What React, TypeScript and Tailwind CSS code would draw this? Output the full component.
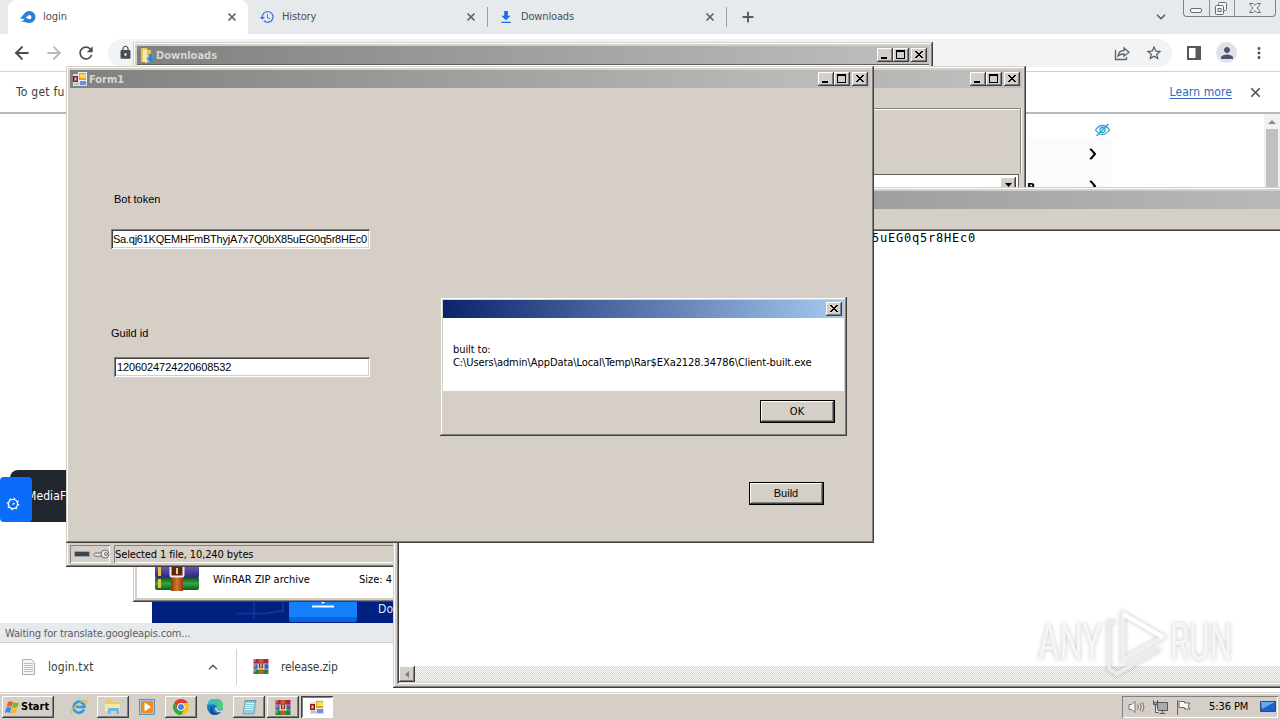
import type { ReactNode } from 'react';
import clsx from 'clsx';
import { ArrowLeft, ArrowRight, ChevronDown, ChevronUp, Plus, X } from 'lucide-react';
import { MdHistory, MdLock, MdMoreVert, MdPerson, MdRefresh, MdStarBorder } from 'react-icons/md';

const ui = "font-['DejaVu_Sans_Condensed','DejaVu_Sans',sans-serif] [font-stretch:condensed]";
const sans = "font-['Liberation_Sans',sans-serif]";

const raised = 'bg-[#d4d0c8] shadow-[inset_-1px_-1px_#404040,inset_1px_1px_#fff,inset_-2px_-2px_#808080]';
const frame =
  'bg-[#d6cfc8] shadow-[inset_-1px_-1px_#404040,inset_1px_1px_#d4d0c8,inset_-2px_-2px_#808080,inset_2px_2px_#fff]';
const sunken = 'shadow-[inset_1px_1px_#808080,inset_-1px_-1px_#fff,inset_2px_2px_#404040,inset_-2px_-2px_#d4d0c8]';
const thinSunken = 'shadow-[inset_1px_1px_#808080,inset_-1px_-1px_#fff]';

function CaptionButton({ kind }: { kind: 'min' | 'max' | 'close' }) {
  return (
    <div className={clsx('h-[14px] w-4', raised, kind === 'close' && 'ml-0.5')}>
      <svg viewBox="0 0 16 14" className="h-[14px] w-4" shapeRendering="crispEdges">
        {kind === 'min' && <path d="M4 9h6v2H4z" />}
        {kind === 'max' && <path d="M3 2h9v9H3zM4 4v6h7V4z" fillRule="evenodd" />}
        {kind === 'close' && (
          <path d="M4 3h2v1h1v1h2V4h1V3h2v1h-1v1h-1v1H9v1h1v1h1v1h1v1h-2V9H9V8H7v1H6v1H4V9h1V8h1V7h1V6H6V5H5V4H4z" />
        )}
      </svg>
    </div>
  );
}

function TitleBar({ icon, title, active, closeOnly }: { icon?: ReactNode; title?: string; active?: boolean; closeOnly?: boolean }) {
  return (
    <div
      className={clsx(
        'flex h-[18px] shrink-0 items-center pr-0.5',
        active ? 'bg-linear-to-r/srgb from-[#0a246a] to-[#a6caf0]' : 'bg-linear-to-r/srgb from-[#808080] to-[#c0c0c0]',
      )}
    >
      <div className="flex w-[19px] justify-end pr-px">{icon}</div>
      <span className={clsx(ui, 'flex-1 pt-px text-[11px] leading-[17px] font-bold text-[#d9d5cd]')}>{title}</span>
      {!closeOnly && (
        <>
          <CaptionButton kind="min" />
          <CaptionButton kind="max" />
        </>
      )}
      <CaptionButton kind="close" />
    </div>
  );
}

function FormIcon({ className }: { className?: string }) {
  return (
    <svg viewBox="0 0 14 14" className={clsx('h-[14px] w-[14px]', className)}>
      <path d="M0 2h14v12H0z" fill="#dcdce2" />
      <path d="M5 0h9v9H5z" fill="#f0f0f0" />
      <path d="M6 1h7v7H6z" fill="#e5a51c" />
      <path d="M7 2h6v4H7z" fill="#ffd957" />
      <path d="M0 4h5v6H0z" fill="#8f1d16" />
      <path d="M1.500 5.500h2v3h-2z" fill="#f2b9a4" />
      <path d="M7 9h6v4H7z" fill="#6d8fe0" />
      <path d="M1 11h5v2H1z" fill="#b9c4dc" />
    </svg>
  );
}

function RarIcon({ className }: { className?: string }) {
  return (
    <svg viewBox="0 0 16 16" className={className}>
      <path d="M0 0h16v5H0z" fill="#b3204a" />
      <path d="M0 5.500h16v5H0z" fill="#4a55c0" />
      <path d="M0 11h16v5H0z" fill="#1c8a30" />
      <path d="M1.500 0v16" stroke="#e9c37c" strokeWidth="1" strokeDasharray="3 2.500" />
      <path d="M5.500 0h5v16h-5z" fill="#c0601c" />
      <path d="M5 5h6v6H5z" fill="#7a3512" />
      <path d="M5 5v5.500h6V5M8 5v4" fill="none" stroke="#f4ece0" strokeWidth="1.300" />
    </svg>
  );
}

// large version of the stacked books, used in the details pane
function BooksIcon({ className }: { className?: string }) {
  return (
    <svg viewBox="0 0 46 46" className={className}>
      <defs>
        <linearGradient id="purple" x2="0" y2="1">
          <stop stopColor="#7a68d8" />
          <stop offset="1" stopColor="#2c2378" />
        </linearGradient>
        <linearGradient id="green" x2="0" y2="1">
          <stop stopColor="#0d4d18" />
          <stop offset=".5" stopColor="#35a545" />
          <stop offset="1" stopColor="#0c5c1a" />
        </linearGradient>
        <linearGradient id="belt" x2="1" y2="0">
          <stop stopColor="#8a3a10" />
          <stop offset=".5" stopColor="#d8762c" />
          <stop offset="1" stopColor="#8a3a10" />
        </linearGradient>
      </defs>
      <rect x="1" y="3" width="44" height="14" rx="2" fill="#b3204a" />
      <rect x="1" y="18" width="44" height="15" rx="2" fill="url(#purple)" />
      <rect x="1" y="32" width="44" height="13" rx="2" fill="url(#green)" />
      <path d="M5.500 20v11M5.500 34v9" stroke="#ecc545" strokeWidth="3" />
      <path d="M17 2h12v44H17z" fill="url(#belt)" />
      <rect x="16.500" y="20.500" width="13" height="11" rx="1.500" fill="#5b260c" stroke="#f3ede2" strokeWidth="2" />
      <path d="M23 23v6" stroke="#e9c9a0" strokeWidth="2" />
    </svg>
  );
}

function FolderIcon() {
  return (
    <svg viewBox="0 0 15 16" className="h-4 w-[15px]">
      <path d="M1 1h6l1 2h3v12H1z" fill="#e8c65a" />
      <path d="M3 2l4 1v13l-4-1z" fill="#fbe9a0" />
      <path d="M9 7h3v4h2.500L10.500 15.500 6.500 11H9z" fill="#1f86d8" stroke="#3fb0f0" strokeWidth=".5" />
    </svg>
  );
}

function TabItem({ icon, label, labelClass }: { icon: ReactNode; label: string; labelClass?: string }) {
  return (
    <div className="flex h-[34px] items-center pr-[10px] pl-3">
      <div className="flex w-[23px] items-center">{icon}</div>
      <span className={clsx(ui, 'flex-1 pt-px text-[11px] text-[#4b4f54]', labelClass)}>{label}</span>
      <X className="h-3 w-3 text-[#5f6368]" strokeWidth={3.5} />
    </div>
  );
}

function Chrome() {
  return (
    <div className="flex h-[692px] flex-col bg-white">
      {/* tab strip */}
      <div className="flex h-[34px] shrink-0 bg-[#e7eaed]">
        <div className="ml-2 w-[240px] rounded-t-lg bg-white">
          <TabItem
            label="login"
            icon={
              <svg viewBox="0 0 16 12" className="h-3 w-4">
                <path d="M0 7C3 6 4 0 9.500 0a6 6 0 0 1 0 12C6 12 4 10 1 10.500 3 9.500 4 9 4.500 8 3 8.200 1.500 7.500 0 7z" fill="#2a80d4" />
                <path d="M5.500 6.500C7.500 6 8 4 9.700 4a2.200 2.200 0 0 1 0 4.300C8 8.300 7 7 5.500 6.500z" fill="#fff" />
              </svg>
            }
          />
        </div>
        <div className="w-[239px]">
          <TabItem
            label="History"
            labelClass="-ml-px tracking-[-0.15px]"
            icon={<MdHistory className="-ml-px h-4 w-4 text-[#3b74d8]" />}
          />
        </div>
        <div className="flex w-[239px] items-center">
          <div className="h-5 w-px bg-[#9a9da1]" />
          <div className="w-[238px]">
            <TabItem
              label="Downloads"
              labelClass="-ml-0.5 tracking-[-0.15px]"
              icon={
                <svg viewBox="0 0 12 14" className="h-[13px] w-3 fill-[#1f6fe0]">
                  <path d="M4 0h4v5h3L6 10 1 5h3zM1 11.500h10V13H1z" />
                </svg>
              }
            />
          </div>
        </div>
        <div className="mt-[7px] h-5 w-px bg-[#9a9da1]" />
        <Plus className="mt-[9px] ml-[13px] h-4 w-4 text-[#55595e]" strokeWidth={2.8} />
        <ChevronDown className="mt-[10px] ml-[398px] h-3.5 w-3.5 text-[#5f6368]" strokeWidth={3} />
        <div className="ml-[15px] flex h-[17px] w-[93px] rounded-b-[4px] border border-t-0 border-[#7d8085]">
          <svg viewBox="0 0 91 16" className="h-4 w-[91px]" fill="none" stroke="#686c72">
            <path d="M25.500 0v16M50.500 0v16" stroke="#8b8e93" />
            <rect x="6.500" y="8.500" width="11" height="4" rx="1.500" fill="#f5f6f8" />
            <rect x="34.500" y="2.500" width="8" height="8" rx="1" fill="#f5f6f8" />
            <rect x="31.500" y="5.500" width="8" height="9" rx="1" fill="#f5f6f8" />
            <rect x="34" y="8.500" width="3" height="3" />
            <path d="M65.500 3.500H69l2 2 2-2h3.500L73 8l3.500 4.500H73l-2-2-2 2h-3.500L69 8z" fill="#f5f6f8" />
          </svg>
        </div>
      </div>

      {/* toolbar */}
      <div className="flex h-[37px] shrink-0 items-center pl-3">
        <ArrowLeft className="h-5 w-5 text-[#4a4d51]" strokeWidth={2.4} />
        <ArrowRight className="ml-3 h-5 w-5 text-[#b9bbbe]" strokeWidth={2.4} />
        <MdRefresh className="ml-[12px] h-5 w-5 text-[#4a4d51]" />
        <div className="ml-3 flex h-7 w-[1064px] items-center rounded-full bg-[#f1f3f4] pr-[9px] pl-2.5">
          <MdLock className="h-[15px] w-[15px] text-[#4a4d51]" />
          <svg viewBox="0 0 16 16" className="ml-auto h-4 w-4" fill="none" stroke="#5f6368" strokeWidth="1.300">
            <path d="M1.500 5v9.500h11V12M4 11c.5-4 3-5.500 6-5.500V3l5 4.200-5 4V9C7 9 5.500 9.500 4 11z" />
          </svg>
          <MdStarBorder className="ml-[15px] h-[18px] w-[18px] text-[#55595e]" />
        </div>
        <svg viewBox="0 0 14 14" className="ml-[15px] h-[14px] w-[14px]">
          <path d="M0 0h14v14H0zM2 2v10h6.500V2z" fill="#55595e" fillRule="evenodd" />
        </svg>
        <div className="ml-[15px] flex h-[21px] w-[21px] items-center justify-center rounded-full bg-[#dfe2e8]">
          <MdPerson className="h-[18px] w-[18px] text-[#4d566e]" />
        </div>
        <MdMoreVert className="ml-[13px] h-[18px] w-[18px] text-[#55595e]" />
      </div>

      {/* info bar */}
      <div
        className={clsx(
          'flex h-[43px] shrink-0 items-center border-t border-b-2 border-[#d0d2d4] border-b-[#b6b8ba] pr-[17px] pl-4 text-[12px]',
          ui,
        )}
      >
        <span className="flex-1 tracking-[0.25px] text-[#3a3d41]">To get fu</span>
        <span className="tracking-[0.1px] text-[#2c6cc0] underline underline-offset-2">Learn more</span>
        <X className="ml-[16px] h-[15px] w-[15px] text-[#55595e]" strokeWidth={2.8} />
      </div>

      {/* page */}
      <div className="flex h-[509px] shrink-0">
        <div className="w-[152px] pt-[356px]">
          <div className="relative flex h-[52px]">
            <div className={clsx('ml-[10px] w-[142px] rounded-tl-lg bg-[#22262e] pl-[17px] text-[12px] leading-[53px] tracking-[0.1px] text-white', ui)}>
              MediaFire
            </div>
            <div className="absolute bottom-0 left-0 flex h-[45px] w-8 items-center justify-center rounded bg-[#0a6cf8] pt-2 pr-[6px]">
              <svg viewBox="0 0 14 14" className="h-[14px] w-[14px]" fill="none" stroke="#fff">
                <circle cx="7" cy="7" r="4.600" strokeWidth="1.400" />
                <circle cx="7" cy="7" r="5.700" strokeWidth="1.200" strokeDasharray="1.500 2.980" />
                <path d="M6.500 7.500l2-1.500" strokeWidth="1.200" />
              </svg>
            </div>
          </div>
        </div>
        <div className="flex h-[60px] w-[876px] self-end bg-[#00217f]">
          <svg viewBox="0 0 226 60" className="h-[60px] w-[226px]">
            <path d="M85 50.500h30l16-3M102 36v20M131 30v20M182 36v20M190 36v22" stroke="#123a9c" strokeWidth="1.500" fill="none" />
            <rect x="137" y="10" width="68" height="49" rx="3" fill="#1480fa" />
            <path d="M137 54h68v2a3 3 0 0 1-3 3h-62a3 3 0 0 1-3-3z" fill="#0a66e0" />
            <path d="M160 43.500h22" stroke="#fff" strokeWidth="2" />
            <path d="M168 38h6l-3 3z" fill="#fff" />
          </svg>
          <span className={clsx(ui, 'mt-[38px] text-[12px] leading-4 tracking-[0.3px] text-[#dfe8ff]')}>Download</span>
        </div>
        <div className="w-[84px]">
          <div className="flex h-6 items-center justify-end bg-white pt-2">
            <svg viewBox="0 0 17 14" className="mr-px h-3.5 w-[17px]" fill="none" stroke="#2aa6cf" strokeWidth="1.300">
              <path d="M1.500 7C4 3.300 6 2.500 8.500 2.500S13 3.300 15.500 7C13 10.700 11 11.500 8.500 11.500S4 10.700 1.500 7zM2.500 13l12-12" />
              <circle cx="8.500" cy="7" r="2.500" />
            </svg>
          </div>
          <div className="flex h-[31px] items-center justify-end bg-[#fcfbfb] pr-[15px]">
            <svg viewBox="0 0 8 12" className="h-3 w-2" fill="none" stroke="#000" strokeWidth="2">
              <path d="M1 1l1.500 1L6 6l-3.500 4L1 11" />
            </svg>
          </div>
          <div className="flex h-[34px] items-center justify-between bg-[#fcfbfb] pr-[15px]">
            <b className={clsx(ui, '-ml-px pt-[3px] text-[12px]')}>B</b>
            <svg viewBox="0 0 8 12" className="h-3 w-2" fill="none" stroke="#000" strokeWidth="2">
              <path d="M1 1l1.500 1L6 6l-3.500 4L1 11" />
            </svg>
          </div>
        </div>
        <div className="ml-auto w-4 bg-[#f1f1f1] pt-[6px]">
          <svg viewBox="0 0 8 4" className="ml-1 h-1 w-2">
            <path d="M4 0l4 4H0z" fill="#8b8b8b" />
          </svg>
          <div className="mx-auto mt-[5px] h-[300px] w-3 bg-[#c1c1c1]" />
        </div>
      </div>

      <div
        className={clsx(
          'h-5 shrink-0 border-b border-[#d0d2d4] bg-[#e7eaed] pl-[5px] text-[11px] leading-[21px] tracking-[-0.17px] text-[#5a5e63]',
          ui,
        )}
      >
        Waiting for translate.googleapis.com...
      </div>

      {/* downloads shelf */}
      <div className={clsx('flex flex-1 items-center pb-0.5 text-[12px] text-[#3a3d41]', ui)}>
        <div className="flex h-9 w-[237px] items-center border-r border-[#d0d2d4] pr-[16px] pl-[22px]">
          <svg viewBox="0 0 13 16" className="h-4 w-[13px]">
            <path d="M.5.500h9l3 3v12H.5z" fill="#f4f5f4" stroke="#a9adab" />
            <path d="M2 4.500h9M2 6.500h9M2 8.500h9M2 10.500h9M2 12.500h9" stroke="#b6c0bd" />
          </svg>
          <span className="ml-[13px] flex-1 tracking-[0.1px]">login.txt</span>
          <ChevronUp className="h-3.5 w-3.5 text-[#5f6368]" strokeWidth={2.8} />
        </div>
        <RarIcon className="ml-4 h-[15px] w-4" />
        <span className="ml-3 tracking-[-0.15px]">release.zip</span>
      </div>
    </div>
  );
}

function DownloadsWindow() {
  return (
    <div className={clsx('absolute top-[42px] left-[133px] flex h-[560px] w-[800px] flex-col p-1', frame)}>
      <TitleBar title="Downloads" icon={<FolderIcon />} />
      <div className="flex flex-1 items-end border-t border-[#606060] bg-white pb-[7px]">
        <BooksIcon className="ml-[17px] h-[46px] w-[46px]" />
        <div className={clsx('mb-[3px] ml-[13px] flex text-[11px] leading-4', ui)}>
          <span className="w-[146px]">WinRAR ZIP archive</span>
          <span>Size: 4.26 MB</span>
        </div>
      </div>
    </div>
  );
}

function RarWindow() {
  return (
    <div className={clsx('absolute top-[66px] left-[66px] flex h-[501px] w-[960px] flex-col p-1', frame)}>
      <TitleBar />
      <div className="mt-[20px] mr-px h-[66px] border-t border-r border-[#808080] shadow-[inset_0_1px_#fff,1px_0_#fff]" />
      <div className="mr-[3px] flex h-[22px] justify-end border border-[#606060] bg-white p-0.5">
        <div className={clsx('flex w-4 items-center justify-center', raised)}>
          <svg viewBox="0 0 7 4" className="h-1 w-[7px]">
            <path d="M0 0h7L3.500 4z" />
          </svg>
        </div>
      </div>
      <div className="flex-1" />
      <div className="flex h-[18px] gap-1">
        <div className={clsx('flex w-10 items-center gap-[3px] pl-1', thinSunken)}>
          <svg viewBox="0 0 16 8" className="h-2 w-4 shrink-0">
            <rect x=".5" y="1.500" width="15" height="5" rx="1" fill="#38464f" stroke="#9ba3a6" />
          </svg>
          <svg viewBox="0 0 17 10" className="h-2.5 w-[17px] shrink-0" fill="#e9e9e6" stroke="#6f7375">
            <path d="M9 4H2L.5 5.500 2 7h2l1 1 1-1h3z" />
            <circle cx="12" cy="5" r="4" />
            <circle cx="13" cy="5" r="1.500" />
          </svg>
        </div>
        <div className={clsx('flex-1 pl-px text-[11px] leading-[19px] tracking-[-0.12px]', ui, thinSunken)}>
          Selected 1 file, 10,240 bytes
        </div>
      </div>
    </div>
  );
}

function NotepadWindow() {
  return (
    <div className={clsx('absolute top-[187px] left-[393px] flex h-[501px] w-[1000px] flex-col p-1', frame)}>
      <TitleBar />
      <div className="h-5" />
      <div className={clsx('flex flex-1 flex-col bg-white p-0.5', sunken)}>
        <div className="w-[577px] flex-1 text-right font-['DejaVu_Sans_Mono',monospace] text-[12px] leading-[14px] tracking-[0.78px]">
          Sa.qj61KQEMHFmBThyjA7x7Q0bX85uEG0q5r8HEc0
        </div>
        <div className="flex h-4 bg-[repeating-conic-gradient(#fff_0_25%,#d4d0c8_0_50%)] bg-[length:2px_2px]">
          <div className={clsx('flex w-4 items-center justify-center', raised)}>
            <svg viewBox="0 0 4 7" className="h-[7px] w-1">
              <path d="M4 0v7L0 3.500z" fill="#808080" />
            </svg>
          </div>
        </div>
      </div>
    </div>
  );
}

function PushButton({ children }: { children: ReactNode }) {
  return (
    <div className="border border-black">
      <div className={clsx('h-[21px] w-[73px] pr-px text-center text-[11px] leading-[21px]', raised)}>{children}</div>
    </div>
  );
}

function FormWindow() {
  return (
    <div className={clsx('absolute top-[66px] left-[66px] flex h-[477px] w-[808px] flex-col p-1', frame)}>
      <TitleBar title="Form1" icon={<FormIcon className="mr-px" />} />
      <div className={clsx('flex flex-1 flex-col pl-[41px] text-[11px] text-black', sans)}>
        <label className="mt-[103px] ml-[3px] h-4 leading-4">Bot token</label>
        <div className={clsx('mt-[22px] h-5 w-[259px] bg-white pl-[2px] leading-[20px] tracking-[-0.25px] whitespace-nowrap', sunken)}>
          Sa.qj61KQEMHFmBThyjA7x7Q0bX85uEG0q5r8HEc0
        </div>
        <label className="mt-[76px] h-4 leading-4">Guild id</label>
        <div className={clsx('mt-4 ml-[3px] h-5 w-[256px] bg-white pl-[3px] leading-[20px] tracking-[-0.1px]', sunken)}>
          1206024724220608532
        </div>
        <div className="mt-[105px] mr-[46px] flex justify-end">
          <PushButton>Build</PushButton>
        </div>
      </div>
    </div>
  );
}

function MessageBox() {
  return (
    <div className={clsx('absolute top-[297px] left-[440px] flex h-[139px] w-[407px] flex-col p-[3px]', frame, ui)}>
      <TitleBar active closeOnly />
      <div className="h-[73px] bg-white pt-[25px] pl-[10px] text-[11px] leading-[13px] tracking-[-0.08px]">
        <p>built to:</p>
        <p>C:\Users\admin\AppData\Local\Temp\Rar$EXa2128.34786\Client-built.exe</p>
      </div>
      <div className="flex justify-end pt-[9px] pr-[9px]">
        <PushButton>OK</PushButton>
      </div>
    </div>
  );
}

function TaskItem({ children, state }: { children: ReactNode; state?: 'open' | 'active' }) {
  return (
    <div
      className={clsx(
        'flex h-[22px] items-center justify-center',
        state ? 'w-8' : 'w-9',
        state === 'open' && raised,
        state === 'active' && 'bg-white shadow-[inset_1px_1px_#404040,inset_-1px_-1px_#fff,inset_2px_2px_#808080]',
      )}
    >
      {children}
    </div>
  );
}

function Taskbar() {
  return (
    <div className={clsx('flex h-7 items-center bg-[#d6cfc8] px-0.5 pt-0.5 shadow-[inset_0_1px_#d4d0c8,inset_0_2px_#fff]', ui)}>
      <div className={clsx('flex h-[22px] w-[52px] items-center pl-[3px] text-[11px] font-bold', raised)}>
        <svg viewBox="0 0 15 15" className="mr-px h-[15px] w-[15px]">
          <path d="M3 2c2-1 3-1 5 0L6.500 7c-2-1-3-1-5 0z" fill="#e8602c" />
          <path d="M8.500 2.200c2 1 3.500 1 5.500 0L12.500 7c-2 1-3.500 1-5.500.2z" fill="#78b82a" />
          <path d="M1.300 7.700c2-1 3-1 5 0L4.800 13c-2-1-3-1-5 0z" fill="#3c8ad8" />
          <path d="M6.800 8c2 .8 3.500.8 5.500 0L11 12.800c-2 1-3.500 1-5.500.2z" fill="#f5bd25" />
        </svg>
        Start
      </div>
      <div className="ml-[7px] flex">
        <TaskItem>
          <svg viewBox="0 0 18 16" className="h-4 w-[18px]" fill="none">
            <path d="M14 10.500A5.500 5.500 0 1 1 14.500 8H6" stroke="#2c9be0" strokeWidth="2.600" />
            <path d="M2 14.500C0 12 8 2 16 1.500c2 .5 0 4-1 5" stroke="#e4b437" strokeWidth="1.200" />
          </svg>
        </TaskItem>
        <TaskItem state="open">
          <svg viewBox="0 0 18 16" className="h-4 w-[18px]">
            <path d="M2 1h5l1 2h8v9H2z" fill="#eccb68" />
            <path d="M1 5h15v7H1z" fill="#fae79a" />
            <path d="M4 15V9h11v6h-2.500v-3h-6v3z" fill="#6db8e6" />
          </svg>
        </TaskItem>
        <TaskItem>
          <svg viewBox="0 0 16 16" className="h-4 w-4">
            <rect x=".5" y=".5" width="15" height="15" fill="#9cc7e8" stroke="#5e93bd" />
            <rect x="2" y="2" width="12" height="12" rx="2" fill="#f58a1c" />
            <path d="M5.500 3.500v9L12 8z" fill="#fff" />
          </svg>
        </TaskItem>
        <TaskItem state="open">
          <svg viewBox="0 0 16 16" className="h-4 w-4">
            <circle cx="8" cy="8" r="8" fill="#fbc116" />
            <path d="M1.070 4A8 8 0 0 1 14.900 4H8a4 4 0 0 0-3.460 6z" fill="#e33b2e" />
            <path d="M1.070 4A8 8 0 0 0 8 16l3.460-6a4 4 0 0 1-6.920 0z" fill="#2da94f" />
            <circle cx="8" cy="8" r="3.800" fill="#fff" />
            <circle cx="8" cy="8" r="3" fill="#4285f4" />
          </svg>
        </TaskItem>
        <TaskItem>
          <svg viewBox="0 0 16 16" className="h-4 w-4">
            <circle cx="8" cy="8" r="8" fill="#1678c8" />
            <path d="M.5 6a7.700 7.700 0 0 1 15.500 1.500c0 2.500-2 3.500-4 3.500-1.500 0-2.500-.7-2-1.500C11 8 9 5.500 6 5.500S1.500 5 .5 6z" fill="#3cc0b4" />
            <path d="M10 1c4 .5 6 3.500 6 6.500 0 2.500-2 3.500-4 3.500-1.500 0-2.500-.7-2-1.500C11.500 7 12 4 10 1z" fill="#55cf7c" />
            <path d="M6 7c-2 5 2 8 6 7.500A8 8 0 0 1 4 14.900C2 12 3 8 6 7z" fill="#0f4f97" />
            <path d="M9.500 10c1 2 4 2 6 .8.500 0 .3.800 0 1.200l-1 1C11 14 8 12.500 8 9.500c0-1 1.500-1.500 2-1 .3.400 0 .9-.5 1.500z" fill="#d6cfc8" />
          </svg>
        </TaskItem>
        <TaskItem state="open">
          <svg viewBox="0 0 16 16" className="h-4 w-4">
            <path d="M4 1.500h11L13 15H2z" fill="#8ed0dd" stroke="#5b8f9b" strokeWidth=".6" />
            <path d="M5 4.500h8M4.500 6.500h8M4 8.500h8M4 10.500h8" stroke="#d9f2f5" />
            <path d="M4 2h11" stroke="#567" strokeDasharray="1 1" />
          </svg>
        </TaskItem>
        <div className="w-0.5" />
        <TaskItem state="open">
          <RarIcon className="h-[15px] w-4" />
        </TaskItem>
        <div className="w-0.5" />
        <TaskItem state="active">
          <FormIcon />
        </TaskItem>
      </div>

      {/* tray */}
      <div className={clsx('ml-auto flex h-[22px] w-[156px] items-center pl-[6px] text-[11px]', thinSunken)}>
        <svg viewBox="0 0 17 14" className="h-3.5 w-[17px]" fill="none" stroke="#77797a">
          <path d="M1 4.500h2.500L7 1.500v11L3.500 9.500H1z" fill="#f7f7f5" />
          <path d="M9.500 4.500q1.500 2.500 0 5M12 3q2.500 4 0 8M14.500 2q3 5 0 10" />
        </svg>
        <svg viewBox="0 0 16 16" className="ml-[7px] h-4 w-4" fill="#f4f4f2" stroke="#55585a">
          <path d="M5.500 3.500h10v8h-10z" fill="#a7abad" />
          <path d="M7.500 14.500h6M10.500 12v2M1.500 1v4.500h4V1M3.500 6v7.500h3" />
          <path d="M2 3h3v2H2z" />
        </svg>
        <svg viewBox="0 0 16 15" className="ml-2 h-[15px] w-4" fill="#fafaf8" stroke="#66696b">
          <path d="M1.500 0v15M3 1.500h5.500v1.500H14l-2 3 2 3H8.500V7.500H3z" />
        </svg>
        <span className="ml-[17px] flex-1 pt-px tracking-[-0.08px] whitespace-nowrap">5:36 PM</span>
        <svg viewBox="0 0 16 14" className="mr-0.5 h-3.5 w-4">
          <path d="M.5 1.500h15v10H.5z" fill="#1d62c8" stroke="#304c78" />
          <path d="M1 2h14L2 9z" fill="#67aaf0" />
          <path d="M3 12h10v1.500H3z" fill="#c8d2df" />
        </svg>
      </div>
    </div>
  );
}

function Watermark() {
  return (
    <svg
      viewBox="0 0 220 80"
      className="absolute top-[606px] left-[1030px] h-[80px] w-[220px] overflow-visible drop-shadow-[0_0_2px_rgba(0,0,0,0.22)]"
    >
      <g fill="#f6f6f6" fontFamily="Liberation Sans Narrow, Roboto, sans-serif" fontSize="51" fontWeight="400">
        <text x="8" y="54" textLength="64" lengthAdjust="spacingAndGlyphs">ANY</text>
        <text x="140" y="54" textLength="62" lengthAdjust="spacingAndGlyphs">RUN</text>
      </g>
      <path d="M85 16h-6v47l8 5 43-25" fill="none" stroke="#ececec" strokeWidth="4" />
      <path d="M93 8v46l40-23z" fill="none" stroke="#f0f0f0" strokeWidth="5" />
      <path d="M93 8l40 23" stroke="#fff" strokeWidth="4" />
    </svg>
  );
}

export default function App() {
  return (
    <div className="relative h-[720px] w-[1280px] overflow-hidden bg-white">
      <Chrome />
      <Taskbar />
      {/* desktop windows, back to front */}
      <DownloadsWindow />
      <RarWindow />
      <NotepadWindow />
      <FormWindow />
      <MessageBox />
      <Watermark />
    </div>
  );
}
